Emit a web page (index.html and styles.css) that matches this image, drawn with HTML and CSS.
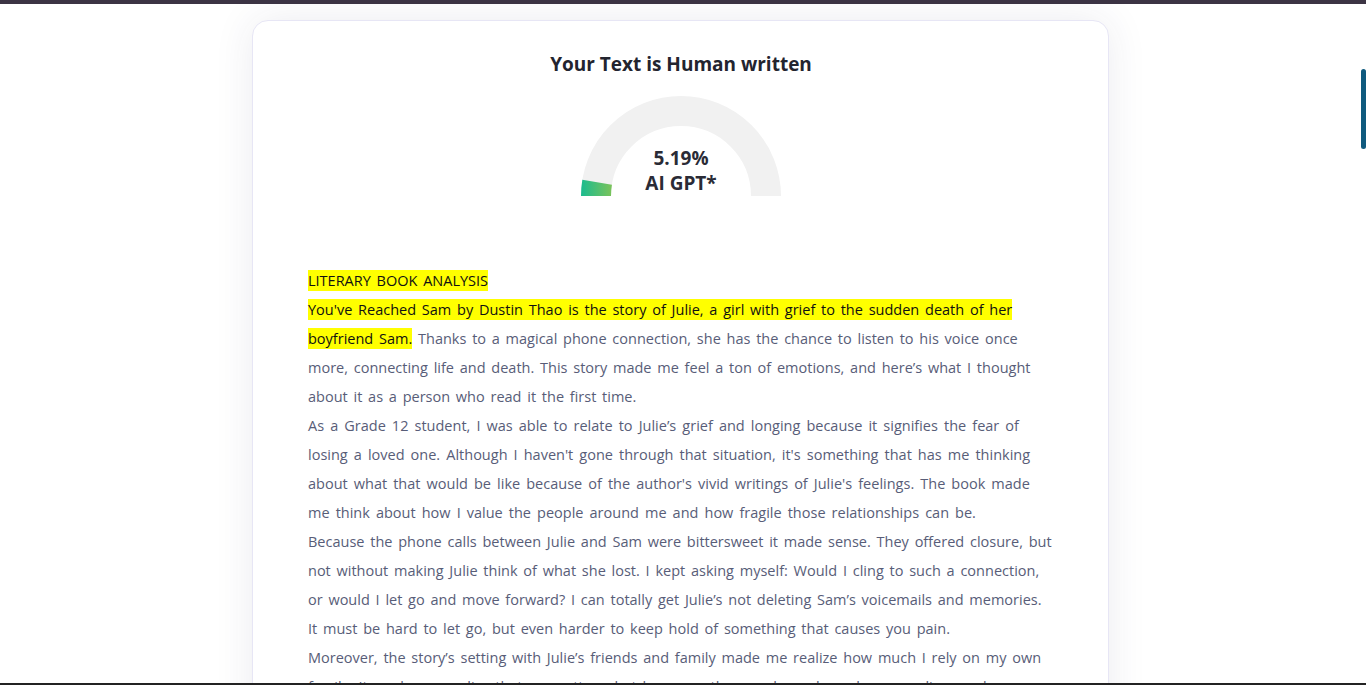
FILE: index.html
```html
<!DOCTYPE html>
<html lang="en">
<head>
<meta charset="utf-8">
<title>AI Detector Result</title>
<link rel="stylesheet" href="styles.css">
</head>
<body>
<div class="topbar"></div>
<div class="layout">
  <main class="main">
    <section class="card">
      <h1 class="title">Your Text is Human written</h1>
      <div class="gauge">
        <svg width="200" height="100" viewBox="0 0 200 100">
          <defs>
            <linearGradient id="g" gradientUnits="userSpaceOnUse" x1="0" y1="0" x2="31" y2="0">
              <stop offset="0" stop-color="#1bbb8f"/>
              <stop offset="1" stop-color="#7bc35a"/>
            </linearGradient>
          </defs>
          <path d="M15,100 A85,85 0 0 1 185,100" fill="none" stroke="#f1f1f1" stroke-width="30"/>
          <path d="M15,100 A85,85 0 0 1 16.13,86.2" fill="none" stroke="url(#g)" stroke-width="30"/>
          <text class="gauge-num" x="100" y="69" text-anchor="middle">5.19%</text>
          <text class="gauge-num" x="100" y="94" text-anchor="middle">AI GPT*</text>
        </svg>
      </div>
      <div class="content">
        <div class="para"><span class="hl">LITERARY BOOK ANALYSIS</span></div>
        <div class="para"><span class="hl">You've Reached Sam by Dustin Thao is the story of Julie, a girl with grief to the sudden death of her boyfriend Sam.</span> Thanks to a magical phone connection, she has the chance to listen to his voice once more, connecting life and death. This story made me feel a ton of emotions, and here’s what I thought about it as a person who read it the first time.</div>
        <div class="para para-wide">As a Grade 12 student, I was able to relate to Julie’s grief and longing because it signifies the fear of losing a loved one. Although I haven't gone through that situation, it's something that has me thinking about what that would be like because of the author's vivid writings of Julie's feelings. The book made me think about how I value the people around me and how fragile those relationships can be.</div>
        <div class="para">Because the phone calls between Julie and Sam were bittersweet it made sense. They offered closure, but not without making Julie think of what she lost. I kept asking myself: Would I cling to such a connection, or would I let go and move forward? I can totally get Julie’s not deleting Sam’s voicemails and memories. It must be hard to let go, but even harder to keep hold of something that causes you pain.</div>
        <div class="para">Moreover, the story’s setting with Julie’s friends and family made me realize how much I rely on my own family. It made me realize that no matter what happens, the people we love shape our lives and memories in every way.</div>
      </div>
    </section>
  </main>
  <div class="rail"><div class="thumb"></div></div>
</div>
<div class="bottombar"></div>
</body>
</html>
```
FILE: styles.css
```css
html, body {
  margin: 0;
  padding: 0;
  background: #ffffff;
  overflow: hidden;
}
body {
  font-family: "Open Sans", "Noto Sans", sans-serif;
  height: 685px;
}
.topbar {
  height: 4px;
  background: #3c3444;
}
.layout {
  display: flex;
}
.main {
  flex: 1;
  display: flex;
  justify-content: center;
  padding-top: 16px;
}
.rail {
  width: 5px;
  flex: none;
}
.thumb {
  margin-top: 65px;
  height: 80px;
  width: 5px;
  border-radius: 3px;
  background: #0f5a7e;
}
.card {
  width: 746px;
  padding: 29px 54px 40px 55px;
  border: 1px solid #e7e6f5;
  border-radius: 16px;
  background: #fff;
  box-shadow: 0 0 40px rgba(40, 40, 90, 0.09);
}
.title {
  margin: 0;
  text-align: center;
  font-size: 19px;
  line-height: 28px;
  font-weight: 700;
  color: #23242f;
}
.gauge {
  display: flex;
  justify-content: center;
  margin-top: 18px;
}
.gauge svg {
  display: block;
}
.gauge-num {
  font-family: "Open Sans", "Noto Sans", sans-serif;
  font-size: 19px;
  font-weight: 700;
  fill: #2a2b36;
}
.content {
  margin-top: 70px;
  font-size: 14.5px;
  word-spacing: 2px;
  line-height: 29px;
  color: #585d78;
}
.para-wide {
  word-spacing: 2.3px;
}
.hl {
  background: #ffff00;
  color: #111;
  padding: 1px 0;
}
.bottombar {
  position: fixed;
  left: 0;
  right: 0;
  bottom: 0;
  height: 2px;
  background: #232323;
}
```
